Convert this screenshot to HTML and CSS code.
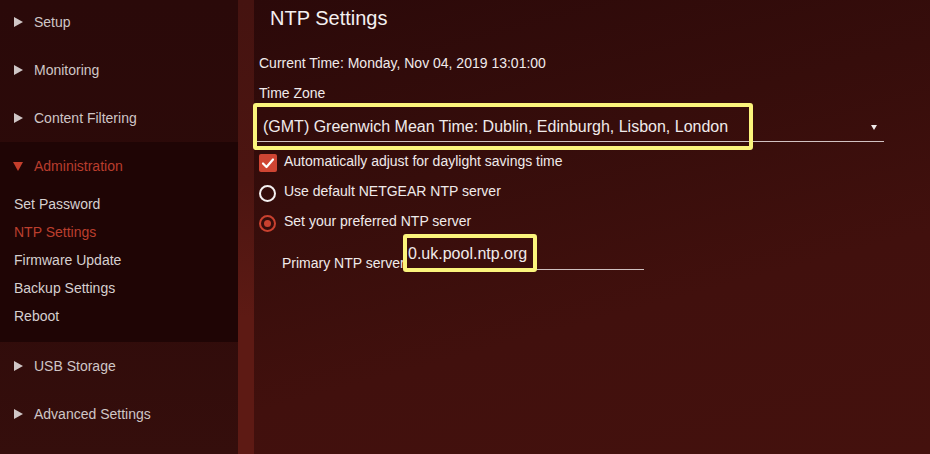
FILE: index.html
```html
<!DOCTYPE html>
<html lang="en">
<head>
  <meta charset="UTF-8" />
  <meta name="viewport" content="width=device-width, initial-scale=1" />
  <title>NTP Settings</title>
  <link rel="stylesheet" href="styles.css">
</head>
<body>
  <div class="page">
    <nav class="sidebar">
      <div class="menu">
        <div class="menu-item"><span class="arrow"></span>Setup</div>
        <div class="menu-item"><span class="arrow"></span>Monitoring</div>
        <div class="menu-item"><span class="arrow"></span>Content Filtering</div>
        <div class="menu-group">
          <div class="menu-item active"><span class="arrow down"></span>Administration</div>
          <ul class="submenu">
            <li>Set Password</li>
            <li class="current">NTP Settings</li>
            <li>Firmware Update</li>
            <li>Backup Settings</li>
            <li>Reboot</li>
          </ul>
        </div>
        <div class="menu-item"><span class="arrow"></span>USB Storage</div>
        <div class="menu-item"><span class="arrow"></span>Advanced Settings</div>
      </div>
    </nav>
    <div class="divider"></div>

    <main class="content">
      <h1>NTP Settings</h1>
      <p class="current-time">Current Time: Monday, Nov 04, 2019 13:01:00</p>

      <div class="field-label">Time Zone</div>
      <div class="select">
        (GMT) Greenwich Mean Time: Dublin, Edinburgh, Lisbon, London
        <span class="caret"></span>
      </div>

      <div class="options">
        <div class="option">
          <span class="checkbox">
            <svg width="18" height="18" viewBox="0 0 18 18"><path d="M4 9.5 L7.5 13 L14 5.5" fill="none" stroke="#fff" stroke-width="2.2" stroke-linecap="round" stroke-linejoin="round"/></svg>
          </span>
          <span class="option-text">Automatically adjust for daylight savings time</span>
        </div>
        <div class="option">
          <span class="radio"></span>
          <span class="option-text">Use default NETGEAR NTP server</span>
        </div>
        <div class="option">
          <span class="radio selected"></span>
          <span class="option-text">Set your preferred NTP server</span>
        </div>
      </div>

      <div class="server-row">
        <span class="server-label">Primary NTP server</span>
        <div class="text-input">0.uk.pool.ntp.org</div>
      </div>

      <!-- highlight marks drawn over the form -->
      <div class="mark mark-zone"></div>
      <div class="mark mark-server"></div>
    </main>
  </div>
</body>
</html>
```

FILE: styles.css
```css
body {
  margin: 0;
  font-family: 'Liberation Sans', Arial, sans-serif;
  background: #2a0909;
  overflow: hidden;
}
.page {
  display: flex;
  height: 454px;
}

/* sidebar */
.sidebar {
  width: 238px;
  flex-shrink: 0;
  background: linear-gradient(180deg, #2a0909 0%, #2c0a09 40%, #350e0c 100%);
  overflow: hidden;
}
.menu {
  margin-top: -2px;
}
.menu-item {
  height: 48px;
  display: flex;
  align-items: center;
  padding-left: 14px;
  font-size: 14px;
  color: #cfc6c6;
}
.arrow {
  width: 0;
  height: 0;
  border-left: 9px solid #cfc6c6;
  border-top: 5px solid transparent;
  border-bottom: 5px solid transparent;
  margin-right: 11px;
}
.arrow.down {
  border-left: 5px solid transparent;
  border-right: 5px solid transparent;
  border-top: 9px solid #c43e2c;
  border-bottom: 0;
  margin-left: -1px;
  margin-right: 11px;
}
.menu-group {
  background: #1f0505;
  padding-bottom: 12px;
}
.menu-item.active {
  color: #b93d2d;
}
.submenu {
  list-style: none;
  margin: 0;
  padding: 0;
}
.submenu li {
  height: 28px;
  line-height: 28px;
  padding-left: 14px;
  font-size: 14px;
  color: #d6d0d0;
}
.submenu li.current {
  color: #bc3f2e;
}

.divider {
  width: 16px;
  flex-shrink: 0;
  background: linear-gradient(180deg, #451310 0%, #4c1511 40%, #5d1a14 70%, #5d1a14 100%);
}

/* main */
.content {
  flex: 1;
  position: relative;
  background: linear-gradient(165deg, #2b0909 0%, #360d0b 35%, #41100d 65%, #44110d 100%);
  color: #f0eaea;
}
h1 {
  margin: 0;
  padding: 6px 0 0 16px;
  font-size: 20px;
  line-height: 24px;
  font-weight: normal;
  color: #f4f0f0;
}
.current-time {
  margin: 25px 0 0 5px;
  font-size: 14px;
  line-height: 16px;
}
.field-label {
  margin: 14px 0 0 5px;
  font-size: 14px;
  line-height: 16px;
}
.select {
  position: relative;
  width: 621px;
  margin-top: 16px;
  padding: 0 0 4px 9px;
  font-size: 16px;
  line-height: 20px;
  border-bottom: 1px solid #d2c2c2;
}
.caret {
  position: absolute;
  right: 7px;
  top: 8px;
  width: 0;
  height: 0;
  border-left: 3px solid transparent;
  border-right: 3px solid transparent;
  border-top: 5px solid #f0eaea;
}
.options {
  margin-top: 6px;
}
.option {
  display: flex;
  align-items: center;
  height: 30px;
  padding-left: 5px;
  font-size: 14px;
  color: #f0eaea;
}
.option-text {
  margin-bottom: 5px;
}
.checkbox {
  width: 18px;
  height: 18px;
  border-radius: 2px;
  background: #cf4533;
  margin-right: 7px;
  display: flex;
}
.radio {
  box-sizing: border-box;
  width: 17px;
  height: 17px;
  border-radius: 50%;
  border: 2px solid #f4f0f0;
  margin-right: 8px;
  display: flex;
  align-items: center;
  justify-content: center;
}
.radio.selected {
  border-color: #c9412f;
}
.radio.selected::after {
  content: "";
  width: 7px;
  height: 7px;
  border-radius: 50%;
  background: #c9412f;
}
.server-row {
  display: flex;
  align-items: flex-end;
  margin-top: 6px;
  padding-left: 28px;
}
.server-label {
  width: 122px;
  white-space: nowrap;
  font-size: 14px;
  line-height: 16px;
  margin-bottom: -1px;
}
.text-input {
  width: 236px;
  padding-left: 4px;
  font-size: 16px;
  line-height: 20px;
  padding-bottom: 5px;
  border-bottom: 1px solid #cfc0c0;
}

/* yellow annotation boxes */
.mark {
  position: absolute;
  box-sizing: border-box;
  border: 4px solid #fbf47c;
  border-radius: 3px;
}
.mark-zone {
  left: -1px;
  top: 103px;
  width: 500px;
  height: 47px;
}
.mark-server {
  left: 149px;
  top: 234px;
  width: 134px;
  height: 38px;
}
```
